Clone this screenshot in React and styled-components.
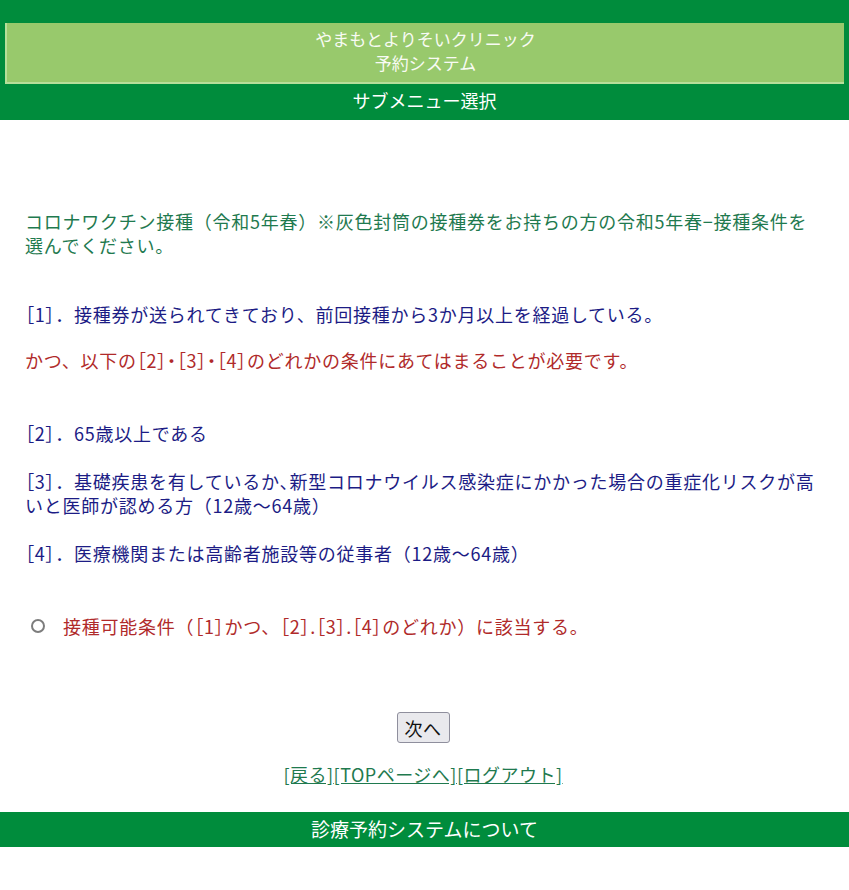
import React from 'react';
import styled, { createGlobalStyle } from 'styled-components';

const GlobalStyle = createGlobalStyle`
    body {
        margin: 0;
        background: #ffffff;
        font-family: 'Noto Sans CJK JP', 'Noto Sans', sans-serif;
    }
`;

const Page = styled.div`
    width: 849px;
    min-height: 890px;
    background: #ffffff;
`;

const Header = styled.header`
    background: #008c3c;
    padding-top: 23px;
`;

const TitleBox = styled.div`
    margin: 0 5px;
    background: #98c96c;
    border-left: 2px solid #b6df9a;
    border-bottom: 2px solid #b6df9a;
    padding: 4px 0 7px;
    text-align: center;
    color: #f8fbf4;
    font-size: 17px;
    line-height: 24px;
`;

const SubTitle = styled.div`
    height: 36px;
    line-height: 32px;
    text-align: center;
    color: #ffffff;
    font-size: 18px;
`;

const Main = styled.main`
    padding: 0 28px 0 25px;
    font-size: 18px;
    line-height: 24px;
    letter-spacing: 0.75px;
`;

const Para = styled.p`
    margin: ${props => props.$gap}px 0 0;
    color: ${props => props.$color};
`;

// 括弧・読点は詰めて表示
const Tight = styled.span`
    font-feature-settings: 'palt';
`;

const RadioRow = styled.label`
    display: flex;
    align-items: center;
    gap: 18px;
    margin-top: 49px;
    color: #b02a2a;
`;

const Radio = styled.input`
    appearance: none;
    margin: 0 0 0 6px;
    width: 14px;
    height: 14px;
    border: 2px solid #7d7d7d;
    border-radius: 50%;
    background: #fff;
    box-sizing: border-box;
`;

const Actions = styled.div`
    display: flex;
    flex-direction: column;
    align-items: center;
    margin-top: 74px;
`;

const NextButton = styled.button`
    height: 31px;
    padding: 0 7px;
    font-family: inherit;
    font-size: 18px;
    letter-spacing: 0.5px;
    color: #111;
    background: #e9e9ed;
    border: 1px solid #8f8f9d;
    border-radius: 3px;
`;

const Links = styled.div`
    margin-top: 19px;
    letter-spacing: 0.5px;
`;

const Link = styled.a`
    color: #1f7a4f;
    text-decoration: underline;
`;

const Footer = styled.footer`
    margin-top: 26px;
    height: 35px;
    line-height: 34px;
    background: #008c3c;
    color: #ffffff;
    text-align: center;
    font-size: 19px;
`;

const GREEN = '#1f7a4f';
const NAVY = '#1c1c85';
const RED = '#b02a2a';

const App = () => {
    return (
        <Page>
            <GlobalStyle />
            <Header>
                <TitleBox>
                    やまもとよりそいクリニック
                    <br />
                    予約システム
                </TitleBox>
                <SubTitle>サブメニュー選択</SubTitle>
            </Header>
            <Main>
                <Para $gap={89} $color={GREEN}>
                    コロナワクチン接種（令和5年春）※灰色封筒の接種券をお持ちの方の令和5年春−接種条件を選んでください。
                </Para>
                <Para $gap={45} $color={NAVY}>
                    <Tight>［1］</Tight>．接種券が送られてきており、前回接種から3か月以上を経過している。
                </Para>
                <Para $gap={22} $color={RED}>
                    かつ、以下の<Tight>［2］・［3］・［4］</Tight>のどれかの条件にあてはまることが必要です。
                </Para>
                <Para $gap={49} $color={NAVY}>
                    <Tight>［2］</Tight>．65歳以上である
                </Para>
                <Para $gap={24} $color={NAVY}>
                    <Tight>［3］</Tight>．基礎疾患を有しているか<Tight>、</Tight>新型コロナウイルス感染症にかかった場合の重症化リスクが高いと医師が認める方（12歳〜64歳）
                </Para>
                <Para $gap={24} $color={NAVY}>
                    <Tight>［4］</Tight>．医療機関または高齢者施設等の従事者（12歳〜64歳）
                </Para>
                <RadioRow>
                    <Radio type="radio" name="cond" />
                    <span>
                        接種可能条件（<Tight>［1］</Tight>かつ、<Tight>［2］.［3］.［4］</Tight>のどれか）に該当する。
                    </span>
                </RadioRow>
                <Actions>
                    <NextButton type="button">次へ</NextButton>
                    <Links>
                        <Link href="#">[戻る]</Link>
                        <Link href="#">[TOPページへ]</Link>
                        <Link href="#">[ログアウト]</Link>
                    </Links>
                </Actions>
            </Main>
            <Footer>診療予約システムについて</Footer>
        </Page>
    );
};

export default App;
